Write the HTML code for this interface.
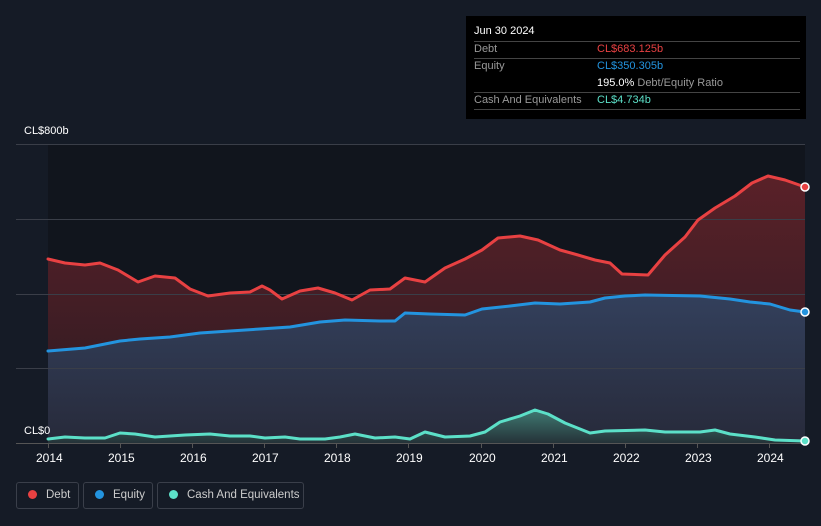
<!DOCTYPE html><html><head><style>
html,body{margin:0;width:821px;height:526px;overflow:hidden}
body{background:#151b26;font-family:"Liberation Sans",sans-serif;position:relative}
.t{position:absolute;font-size:11px;color:#fff;white-space:nowrap}
.lg{position:absolute;top:482px;height:27px;border:1px solid #3a3f4a;border-radius:3px;color:#ccc;font-size:11.5px;line-height:25px;box-sizing:border-box;white-space:nowrap;overflow:hidden}
.lg i{display:inline-block;width:9px;height:9px;border-radius:50%;margin:0 9px 0 11px;vertical-align:-1px}
</style></head><body>
<svg width="821" height="526" style="position:absolute;left:0;top:0">
<defs>
<linearGradient id="gd" x1="0" y1="0" x2="0" y2="1"><stop offset="0" stop-color="#5a2128"/><stop offset="1" stop-color="#2a1a22"/></linearGradient>
<linearGradient id="ge" x1="0" y1="0" x2="0" y2="1"><stop offset="0" stop-color="#33405c"/><stop offset="1" stop-color="#272a3a"/></linearGradient>
<linearGradient id="gc" x1="0" y1="0" x2="0" y2="1"><stop offset="0" stop-color="#3f7a72"/><stop offset="1" stop-color="#253238"/></linearGradient>
</defs>
<rect x="48" y="144" width="757" height="299" fill="#11151d"/>
<path d="M48,259 L65,263 85,265 100,263 118,270 138,282 155,276 175,278 190,289 208,296 230,293 250,292 262,286 270,290 282,299 300,291 318,288 335,293 352,300 370,290 390,289 405,278 425,282 445,268 465,259 482,250 498,238 520,236 538,240 560,250 578,255 595,260 610,263 622,274 648,275 665,255 685,237 698,220 715,208 735,196 752,183 768,176 785,180 805,187 L805,443 48,443Z" fill="url(#gd)"/>
<path d="M48,351 L85,348 100,345 120,341 140,339 170,337 200,333 230,331 260,329 290,327 320,322 345,320 380,321 395,321 405,313 430,314 465,315 482,309 510,306 535,303 560,304 590,302 605,298 625,296 645,295 700,296 730,299 750,302 770,304 790,310 805,312 L805,443 48,443Z" fill="url(#ge)"/>
<path d="M48,439 L65,437 85,438 105,438 120,433 135,434 155,437 185,435 210,434 230,436 250,436 265,438 285,437 300,439 325,439 340,437 355,434 375,438 395,437 410,439 425,432 445,437 470,436 485,432 500,422 520,416 535,410 548,414 565,423 590,433 605,431 645,430 665,432 700,432 715,430 730,434 755,437 775,440 805,441 L805,443 48,443Z" fill="url(#gc)"/>
<g stroke="#3a3e48" stroke-width="1"><line x1="16" y1="144.5" x2="805" y2="144.5"/><line x1="16" y1="219.5" x2="805" y2="219.5"/><line x1="16" y1="294.5" x2="805" y2="294.5"/><line x1="16" y1="368.5" x2="805" y2="368.5"/><line x1="16" y1="443.5" x2="805" y2="443.5" stroke="#555"/></g>
<g stroke="#555" ><line x1="48.5" y1="443" x2="48.5" y2="448"/><line x1="120.5" y1="443" x2="120.5" y2="448"/><line x1="192.5" y1="443" x2="192.5" y2="448"/><line x1="264.5" y1="443" x2="264.5" y2="448"/><line x1="336.5" y1="443" x2="336.5" y2="448"/><line x1="408.5" y1="443" x2="408.5" y2="448"/><line x1="481.5" y1="443" x2="481.5" y2="448"/><line x1="553.5" y1="443" x2="553.5" y2="448"/><line x1="625.5" y1="443" x2="625.5" y2="448"/><line x1="697.5" y1="443" x2="697.5" y2="448"/><line x1="769.5" y1="443" x2="769.5" y2="448"/></g>
<g fill="none" stroke-width="3" stroke-linejoin="round" stroke-linecap="round">
<path stroke="#e84142" d="M48,259 L65,263 85,265 100,263 118,270 138,282 155,276 175,278 190,289 208,296 230,293 250,292 262,286 270,290 282,299 300,291 318,288 335,293 352,300 370,290 390,289 405,278 425,282 445,268 465,259 482,250 498,238 520,236 538,240 560,250 578,255 595,260 610,263 622,274 648,275 665,255 685,237 698,220 715,208 735,196 752,183 768,176 785,180 805,187"/>
<path stroke="#2394df" d="M48,351 L85,348 100,345 120,341 140,339 170,337 200,333 230,331 260,329 290,327 320,322 345,320 380,321 395,321 405,313 430,314 465,315 482,309 510,306 535,303 560,304 590,302 605,298 625,296 645,295 700,296 730,299 750,302 770,304 790,310 805,312"/>
<path stroke="#5ce0c8" d="M48,439 L65,437 85,438 105,438 120,433 135,434 155,437 185,435 210,434 230,436 250,436 265,438 285,437 300,439 325,439 340,437 355,434 375,438 395,437 410,439 425,432 445,437 470,436 485,432 500,422 520,416 535,410 548,414 565,423 590,433 605,431 645,430 665,432 700,432 715,430 730,434 755,437 775,440 805,441"/>
</g>
<circle cx="805" cy="187" r="4" fill="#e84142" stroke="#fff" stroke-width="1.5"/>
<circle cx="805" cy="312" r="4" fill="#2394df" stroke="#fff" stroke-width="1.5"/>
<circle cx="805" cy="441" r="4" fill="#5ce0c8" stroke="#fff" stroke-width="1.5"/>
</svg>
<div class="t" style="left:24px;top:125px">CL$800b</div>
<div class="t" style="left:24px;top:425px">CL$0</div>
<div class="t" style="left:36px;top:451px;font-size:12px">2014</div>
<div class="t" style="left:108px;top:451px;font-size:12px">2015</div>
<div class="t" style="left:180px;top:451px;font-size:12px">2016</div>
<div class="t" style="left:252px;top:451px;font-size:12px">2017</div>
<div class="t" style="left:324px;top:451px;font-size:12px">2018</div>
<div class="t" style="left:396px;top:451px;font-size:12px">2019</div>
<div class="t" style="left:469px;top:451px;font-size:12px">2020</div>
<div class="t" style="left:541px;top:451px;font-size:12px">2021</div>
<div class="t" style="left:613px;top:451px;font-size:12px">2022</div>
<div class="t" style="left:685px;top:451px;font-size:12px">2023</div>
<div class="t" style="left:757px;top:451px;font-size:12px">2024</div>
<div style="position:absolute;left:466px;top:16px;width:340px;height:103px;background:#000;font-size:11px;color:#999;white-space:nowrap">
<div style="position:absolute;left:8px;top:9px;color:#fff">Jun 30 2024</div>
<div style="position:absolute;left:8px;right:6px;top:25px;border-top:1px solid #444"></div>
<div style="position:absolute;left:8px;top:27px">Debt</div><div style="position:absolute;left:131px;top:27px;color:#e84142">CL$683.125b</div>
<div style="position:absolute;left:8px;right:6px;top:42px;border-top:1px solid #444"></div>
<div style="position:absolute;left:8px;top:44px">Equity</div><div style="position:absolute;left:131px;top:44px;color:#2394df">CL$350.305b</div>
<div style="position:absolute;left:131px;top:61px"><b style="color:#fff;font-weight:normal">195.0%</b> Debt/Equity Ratio</div>
<div style="position:absolute;left:8px;right:6px;top:76px;border-top:1px solid #444"></div>
<div style="position:absolute;left:8px;top:78px">Cash And Equivalents</div><div style="position:absolute;left:131px;top:78px;color:#5ce0c8">CL$4.734b</div>
<div style="position:absolute;left:8px;right:6px;top:93px;border-top:1px solid #444"></div>
</div>
<div class="lg" style="left:16px;width:63px"><i style="background:#e84142"></i>Debt</div>
<div class="lg" style="left:83px;width:70px"><i style="background:#2394df"></i>Equity</div>
<div class="lg" style="left:157px;width:147px"><i style="background:#5ce0c8"></i>Cash And Equivalents</div>
</body></html>
